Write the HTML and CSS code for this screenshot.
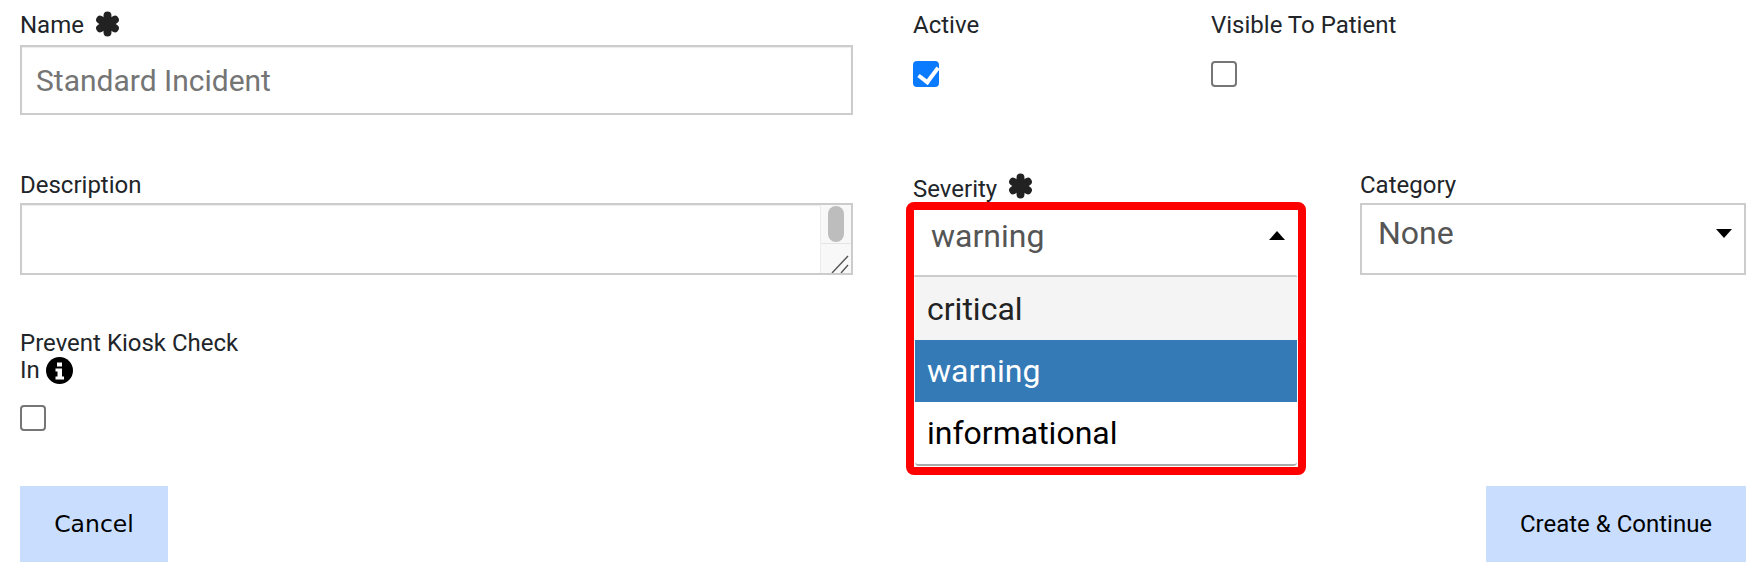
FILE: index.html
```html
<!DOCTYPE html>
<html lang="en">
<head>
<meta charset="utf-8">
<title>Incident</title>
<link rel="stylesheet" href="styles.css">
</head>
<body>
<svg class="defs" width="0" height="0" aria-hidden="true">
  <symbol id="asterisk" viewBox="0 0 24 24">
    <g stroke="#222" stroke-width="7.6" stroke-linecap="round">
      <path d="M12 3.800v16.400"/>
      <path d="M4.900 7.900l14.200 8.200"/>
      <path d="M19.100 7.900L4.900 16.100"/>
    </g>
  </symbol>
</svg>
<form class="form">
  <div class="col">
    <div class="field name-field">
      <label class="label">Name <svg class="req"><use href="#asterisk"/></svg></label>
      <div class="box input">Standard Incident</div>
    </div>
    <div class="field desc-field">
      <label class="label">Description</label>
      <div class="box textarea">
        <div class="scroll">
          <div class="track"><span class="thumb"></span></div>
          <div class="grip">
            <svg width="29" height="30" viewBox="0 0 29 30"><path d="M11 29L27 12M20 29l7-8" stroke="#555" stroke-width="1.4" fill="none"/></svg>
          </div>
        </div>
      </div>
    </div>
    <div class="field kiosk-field">
      <label class="label kiosk-label">Prevent Kiosk Check In
        <svg class="info" viewBox="0 0 27 27"><circle cx="13.5" cy="13.5" r="13.5" fill="#000"/><path d="M11 5.500h5v4h-5zM9.500 11.500h6.500v8h2v3h-8.500v-3h2v-5h-2z" fill="#fff"/></svg>
      </label>
      <input class="check" type="checkbox">
    </div>
  </div>
  <div class="col">
    <div class="checks">
      <div class="check-field">
        <label class="label">Active</label>
        <input class="check" type="checkbox" checked>
      </div>
      <div class="check-field">
        <label class="label">Visible To Patient</label>
        <input class="check" type="checkbox">
      </div>
    </div>
    <div class="selects">
      <div class="field sev-field">
        <label class="label">Severity <svg class="req"><use href="#asterisk"/></svg></label>
        <div class="select-wrap">
          <div class="select-open">
            <span>warning</span>
            <span class="caret-up"></span>
          </div>
          <ul class="menu">
            <li class="hover">critical</li>
            <li class="selected">warning</li>
            <li>informational</li>
          </ul>
          <div class="redbox"></div>
        </div>
      </div>
      <div class="field cat-field">
        <label class="label">Category</label>
        <div class="box select">
          <span>None</span>
          <span class="caret-down"></span>
        </div>
      </div>
    </div>
  </div>
  <div class="actions">
    <button class="btn cancel" type="button">Cancel</button>
    <button class="btn create" type="button">Create &amp; Continue</button>
  </div>
</form>
</body>
</html>
```

FILE: styles.css
```css
* { box-sizing: border-box; }
html, body { margin: 0; background: #fff; }
body { width: 1764px; height: 580px; overflow: hidden; font-family: Roboto, "Liberation Sans", sans-serif; color: #212529; }
.defs { position: absolute; }
.form { display: grid; grid-template-columns: 833px 833px; column-gap: 60px; padding: 0 18px 0 20px; }
.col { display: flex; flex-direction: column; }
.label { display: block; font-size: 24px; line-height: 28px; color: #212529; }
.req { width: 25px; height: 26px; margin-left: 5px; vertical-align: -2px; }
.box { border: 2px solid #ccc; background: #fff; }
.name-field { padding-top: 11px; }
.name-field .label { height: 34px; white-space: nowrap; }
.name-field .req { vertical-align: -4px; }
.input { height: 70px; padding: 0 14px; font-size: 30px; line-height: 68px; color: #757575; box-shadow: inset 0 1px 1px rgba(0,0,0,.08); }
.desc-field { margin-top: 56px; }
.desc-field .label { height: 32px; }
.textarea { height: 72px; display: flex; justify-content: flex-end; box-shadow: inset 0 1px 1px rgba(0,0,0,.08); }
.scroll { width: 31px; height: 100%; background: #f8f8f8; border-left: 1px solid #ececec; display: flex; flex-direction: column; }
.track { height: 39px; padding: 1px 7px 0; border-bottom: 1px solid #e4e4e4; }
.thumb { display: block; width: 16px; height: 36px; border-radius: 8px; background: #bdbdbd; }
.grip { flex: 1; overflow: hidden; }
.grip svg { display: block; }
.kiosk-field { margin-top: 55px; }
.kiosk-label { width: 240px; line-height: 27px; }
.info { width: 27px; height: 27px; margin: -6px 0; vertical-align: 0; }
.check { appearance: none; position: relative; display: block; width: 26px; height: 26px; margin: 0; background: #fff; border: 2px solid #767676; border-radius: 4px; }
.check:checked { background: #0a7bff; border-color: #0a7bff; }
.check:checked::after { content: ""; position: absolute; left: 7px; top: 0; width: 9px; height: 16px; border: solid #fff; border-width: 0 4px 4px 0; transform: rotate(37deg); }
.kiosk-field .check { margin-top: 21px; }
.checks { display: flex; height: 115px; padding-top: 11px; }
.check-field { width: 298px; }
.check-field .label { height: 50px; }
.selects { display: flex; column-gap: 62px; margin-top: 56px; }
.sev-field { width: 385px; }
.sev-field .label { height: 32px; padding-top: 2px; white-space: nowrap; }
.cat-field { width: 386px; }
.cat-field .label { height: 32px; }
.select-wrap { position: relative; height: 72px; }
.select-open { height: 74px; padding: 7px 11px 0 16px; display: flex; justify-content: space-between; font-size: 32px; line-height: 48px; color: #555; background: #fff; border: 2px solid #fff; border-bottom: 2px solid #ccc; }
.caret-up { width: 0; height: 0; margin-top: 19px; border: 8px solid transparent; border-top: 0; border-bottom: 9px solid #000; }
.caret-down { width: 0; height: 0; margin-top: 20px; border: 8px solid transparent; border-bottom: 0; border-top: 9px solid #000; }
.select { height: 72px; padding: 4px 12px 0 16px; display: flex; justify-content: space-between; font-size: 32px; line-height: 48px; color: #555; }
.menu { position: absolute; left: 2px; right: 1px; top: 74px; margin: 0; padding: 0; list-style: none; font-size: 32px; color: #000; background: #fff; border-bottom: 2px solid #aaa; border-radius: 0 0 4px 4px; }
.menu li { height: 62px; padding-left: 12px; line-height: 62px; }
.menu .hover { background: #f4f4f4; height: 63px; line-height: 65px; color: #222; }
.menu .selected { background: #337ab7; color: #fff; }
.redbox { position: absolute; left: -7px; top: -1px; width: 400px; height: 273px; border: 8px solid #f00; border-radius: 8px; }
.actions { grid-column: 1 / -1; display: flex; justify-content: space-between; margin-top: 55px; }
.btn { height: 76px; border: 0; background: #c9deff; color: #000; font-family: Roboto, sans-serif; font-size: 24px; padding: 0; }
.cancel { width: 148px; font-family: "DejaVu Sans", sans-serif; font-size: 23.5px; }
.create { width: 260px; }
```
